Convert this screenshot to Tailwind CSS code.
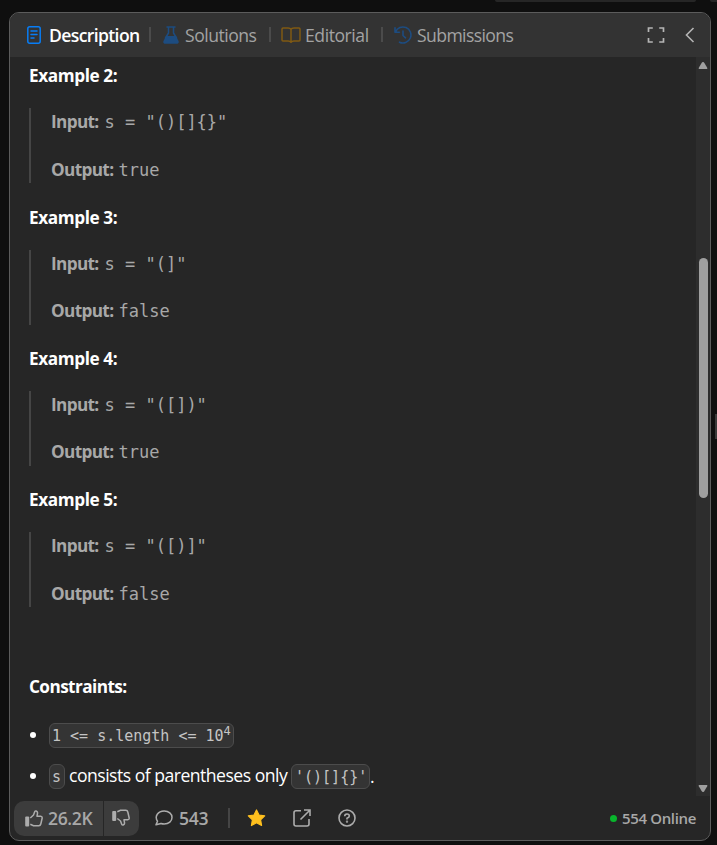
<!DOCTYPE html>
<html lang="en">
<head>
<meta charset="utf-8">
<title>Problem description</title>
<script src="https://cdn.jsdelivr.net/npm/@tailwindcss/browser@4"></script>
</head>
<body class="bg-[#0f0f0f] h-[845px] w-[717px] overflow-hidden relative font-['Open_Sans','Noto_Sans',sans-serif] text-[17.6px] text-white whitespace-nowrap">
<div class="absolute top-0 left-[495px] w-[201px] h-[2px] rounded-b bg-[#262626]"></div>
<div class="absolute top-0 left-[710px] w-[7px] h-[2px] rounded-bl bg-[#262626]"></div>
<div class="absolute top-[414px] left-[715px] w-[2px] h-[25px] bg-[#3a3a3a]"></div>
<main class="ml-[9px] mt-[12px] w-[702px] h-[829px] border border-[#5c5c5c] rounded-[10px] bg-[#262626] overflow-hidden flex flex-col">
  <header class="h-[44px] shrink-0 bg-[#333333] flex items-center justify-between pl-[17px] pr-[13px] text-[#a3a3a3]">
    <nav class="flex items-center">
      <div class="flex items-center w-[122px]">
        <svg class="w-[14px] h-[18px] mr-[8px] shrink-0" viewBox="0 0 14 18" fill="none" stroke="#087df5" stroke-width="1.5" stroke-linecap="round"><rect x=".8" y=".8" width="12.4" height="16.4" rx="2"/><path d="M4 5h6M4 8.5h6M4 12h3"/></svg>
        <span class="font-semibold text-white tracking-[-0.64px]">Description</span>
      </div>
      <i class="w-[2px] h-[15px] bg-[#4b4b4b]"></i>
      <div class="flex items-center w-[118px] pl-[12px]">
        <svg class="w-[16px] h-[18px] mr-[6px] shrink-0" viewBox="0 0 16 18"><path d="M4 1h8M5.5 1v6L2.5 12M10.500 1v6l3 5" fill="none" stroke="#1d4c80" stroke-width="1.5" stroke-linecap="round"/><path d="M3 10h10l2.500 5c.7 1.500-.2 2.800-1.800 2.800H2.300C.7 17.800-.2 16.500.5 15z" fill="#1d4c80"/></svg>
        <span class="tracking-[-0.5px]">Solutions</span>
      </div>
      <i class="w-[2px] h-[15px] bg-[#4b4b4b]"></i>
      <div class="flex items-center w-[110px] pl-[10px]">
        <svg class="w-[20px] h-[16px] mr-[4px] shrink-0" viewBox="0 0 20 16" fill="none" stroke="#805a13" stroke-width="1.5" stroke-linejoin="round"><path d="M10 2.500C9.500 1.300 8.500 1 7 1H2Q1 1 1 2v11q0 1 1 1h5q2 0 3 1.300Q11 14 13 14h5q1 0 1-1V2q0-1-1-1h-5c-1.500 0-2.500.3-3 1.500zV15"/></svg>
        <span class="tracking-[-0.45px]">Editorial</span>
      </div>
      <i class="w-[2px] h-[15px] bg-[#4b4b4b]"></i>
      <div class="flex items-center pl-[11px]">
        <svg class="w-[18px] h-[18px] mr-[5px] shrink-0" viewBox="0 0 18 18" fill="none" stroke="#1d4c80" stroke-width="1.600" stroke-linecap="round" stroke-linejoin="round"><path d="M1 1.800v4.400h4.400M1.500 6A8 8 0 1 1 5.500 16.200M9 5v4.500l2.500 2.300"/></svg>
        <span class="tracking-[-0.6px]">Submissions</span>
      </div>
    </nav>
    <div class="flex items-center gap-[18px]">
      <svg class="w-[18px] h-[18px]" viewBox="0 0 18 18" fill="none" stroke="#b5b5b5" stroke-width="1.700"><path d="M1.500 6V2h4.300M12.200 2h4.300v4M16.500 12v4h-4.300M5.800 16H1.500v-4"/></svg>
      <svg class="w-[14px] h-[18px]" viewBox="0 0 14 18" fill="none" stroke="#b5b5b5" stroke-width="1.600"><path d="M10.500 2L3.500 9l7 7"/></svg>
    </div>
  </header>
  <div class="h-[739px] shrink-0 flex">
    <article class="flex-1 pl-[19px] pt-[0.3px]">
      <section class="h-[141.33px]">
        <h3 class="h-[38px] leading-[37px] font-bold text-[17.2px] tracking-[-0.3px]"><span class="tracking-[-0.4px]">Example 2:</span></h3>
        <div class="mt-[13px] h-[75px] border-l-2 border-[#454545] pl-[20px] text-[#a8a8a8] leading-[28px]">
          <p class="h-[47.5px] flex"><b class="w-[53.5px] text-[17.2px] tracking-[-0.65px]">Input:</b><code class="font-['DejaVu_Sans_Mono',monospace] text-[17px] whitespace-pre">s = "()[]{}"</code></p>
          <p class="flex"><b class="w-[67.5px] text-[17.2px] tracking-[-0.65px]">Output:</b><code class="font-['DejaVu_Sans_Mono',monospace] text-[17px]">true</code></p>
        </div>
      </section>
      <section class="h-[141.33px]">
        <h3 class="h-[38px] leading-[37px] font-bold text-[17.2px] tracking-[-0.4px]">Example 3:</h3>
        <div class="mt-[13px] h-[75px] border-l-2 border-[#454545] pl-[20px] text-[#a8a8a8] leading-[28px]">
          <p class="h-[47.5px] flex"><b class="w-[53.5px] text-[17.2px] tracking-[-0.65px]">Input:</b><code class="font-['DejaVu_Sans_Mono',monospace] text-[17px] whitespace-pre">s = "(]"</code></p>
          <p class="flex"><b class="w-[67.5px] text-[17.2px] tracking-[-0.65px]">Output:</b><code class="font-['DejaVu_Sans_Mono',monospace] text-[17px]">false</code></p>
        </div>
      </section>
      <section class="h-[141.33px]">
        <h3 class="h-[38px] leading-[37px] font-bold text-[17.2px] tracking-[-0.4px]">Example 4:</h3>
        <div class="mt-[13px] h-[75px] border-l-2 border-[#454545] pl-[20px] text-[#a8a8a8] leading-[28px]">
          <p class="h-[47.5px] flex"><b class="w-[53.5px] text-[17.2px] tracking-[-0.65px]">Input:</b><code class="font-['DejaVu_Sans_Mono',monospace] text-[17px] whitespace-pre">s = "([])"</code></p>
          <p class="flex"><b class="w-[67.5px] text-[17.2px] tracking-[-0.65px]">Output:</b><code class="font-['DejaVu_Sans_Mono',monospace] text-[17px]">true</code></p>
        </div>
      </section>
      <section class="h-[141.33px]">
        <h3 class="h-[38px] leading-[37px] font-bold text-[17.2px] tracking-[-0.4px]">Example 5:</h3>
        <div class="mt-[13px] h-[75px] border-l-2 border-[#454545] pl-[20px] text-[#a8a8a8] leading-[28px]">
          <p class="h-[47.5px] flex"><b class="w-[53.5px] text-[17.2px] tracking-[-0.65px]">Input:</b><code class="font-['DejaVu_Sans_Mono',monospace] text-[17px] whitespace-pre">s = "([)]"</code></p>
          <p class="flex"><b class="w-[67.5px] text-[17.2px] tracking-[-0.65px]">Output:</b><code class="font-['DejaVu_Sans_Mono',monospace] text-[17px]">false</code></p>
        </div>
      </section>
      <h3 class="mt-[50px] h-[28px] leading-[28px] font-bold text-[17.2px] tracking-[-0.58px]">Constraints:</h3>
      <ul class="mt-[14px]">
        <li class="h-[41px] flex items-center"><i class="w-[6px] h-[6px] rounded-full bg-white ml-[1px] mr-[13px]"></i><code class="h-[25px] w-[185px] border border-[#4c4c4c] bg-[#343434] rounded-[6px] pl-[2px] leading-[24px] font-['DejaVu_Sans_Mono',monospace] text-[15px] text-[#c4c4c4]">1 &lt;= s.length &lt;= 10<sup class="text-[12px] leading-none top-[-6px]">4</sup></code></li>
        <li class="h-[41px] flex items-center"><i class="w-[6px] h-[6px] rounded-full bg-white ml-[1px] mr-[13px]"></i><code class="h-[25px] w-[16px] border border-[#4c4c4c] bg-[#343434] rounded-[6px] pl-[2px] leading-[24px] font-['DejaVu_Sans_Mono',monospace] text-[15px] text-[#c4c4c4]">s</code><span class="ml-[4px] w-[222px] -mt-[1px] tracking-[-0.51px]">consists of parentheses only</span><code class="h-[25px] w-[79px] border border-[#4c4c4c] bg-[#343434] rounded-[6px] pl-[3px] leading-[24px] font-['DejaVu_Sans_Mono',monospace] text-[15px] text-[#c4c4c4]">'()[]{}'</code><span>.</span></li>
      </ul>
    </article>
    <aside class="w-[14px] bg-[#2d2d2d] flex flex-col items-center">
      <svg class="w-[10px] h-[8px] mt-[5px] shrink-0" viewBox="0 0 10 8" fill="#9f9f9f"><path d="M5 0c.7 0 1 .4 1.400 1L9.200 5.700c.5 1-.1 1.300-.8 1.300H1.600C.9 7 .3 6.700.8 5.700L3.600 1C4 .4 4.300 0 5 0"/></svg>
      <div class="mt-[188px] w-[9px] h-[240px] rounded-full bg-[#9f9f9f] shrink-0"></div>
      <svg class="w-[10px] h-[8px] mt-auto mb-[4px] shrink-0" viewBox="0 0 10 8" fill="#9f9f9f"><path d="M5 8c.7 0 1-.4 1.400-1L9.200 2.300C9.700 1.300 9.100 1 8.400 1H1.600C.9 1 .3 1.300.8 2.300L3.600 7C4 7.600 4.300 8 5 8"/></svg>
    </aside>
  </div>
  <footer class="flex-1 flex items-center justify-between pl-[4px] pr-[14px] text-[#a8a8a8] font-semibold">
    <div class="flex items-center h-[35px]">
      <div class="w-[89px] h-[35px] rounded-l-[10px] bg-[#3c3c3c] flex items-center pl-[11px]">
        <svg class="w-[18px] h-[17px] mr-[5px]" viewBox="0 0 18 17" fill="none" stroke="#acacac" stroke-width="1.500" stroke-linejoin="round"><rect x=".2" y="6.500" width="4" height="10" rx="1" fill="#acacac" stroke="none"/><path d="M5.300 8L8.500 5 9.800 1.500Q10.200.7 11.200 1q1.600.5 1.300 2.400L12 6.200h3.700q1.600.2 1.500 1.800L15.800 14q-.4 1.700-2 1.700H8.500L5.300 14.300"/></svg>
        <span class="tracking-[-0.4px]">26.2K</span>
      </div>
      <div class="ml-[1px] w-[35px] h-[35px] rounded-r-[10px] bg-[#3c3c3c] flex items-center pl-[8px]">
        <svg class="w-[18px] h-[17px] -mt-[2px]" viewBox="0 0 18 17" fill="none" stroke="#acacac" stroke-width="1.500" stroke-linejoin="round"><rect x=".2" y="2" width="4" height="10" rx="1" fill="#acacac" stroke="none"/><path d="M5.300 2.700L8.500 1.300h5.300q1.600 0 2 1.700L17.200 9q.1 1.600-1.500 1.800H12l.5 2.800q.3 1.900-1.300 2.400-1 .3-1.400-.5L8.500 12 5.300 9.500"/></svg>
      </div>
      <svg class="w-[18px] h-[16px] ml-[16px] mr-[6px]" viewBox="0 0 18 16" fill="none" stroke="#acacac" stroke-width="1.500" stroke-linejoin="round"><path d="M1 14.800l1.500-3.600C-.8 6.200 3 1 9.200 1 13.800 1 17 4 17 7.500S13.800 14 9.200 14q-1.700 0-3.200-.5z"/></svg>
      <span class="tracking-[-0.3px] w-[30px]">543</span>
      <i class="w-[2px] h-[20px] bg-[#454545] ml-[19px]"></i>
      <svg class="w-[19px] h-[18px] ml-[17px]" viewBox="0 0 19 18"><path d="M9.500 1l2.500 5 5.700.8-4.100 4 1 5.700-5.100-2.700-5.100 2.700 1-5.700-4.100-4L7 6z" fill="#ffc01e" stroke="#ffc01e" stroke-width="1.200" stroke-linejoin="round"/></svg>
      <svg class="w-[18px] h-[18px] ml-[27px]" viewBox="0 0 18 18" fill="none" stroke="#acacac" stroke-width="1.600"><path d="M8 1.800H3Q1 1.800 1 3.800V15q0 2 2 2h11q2 0 2-2v-5M7.500 10.500L16.800 1.200M11 1h6v6"/></svg>
      <svg class="w-[18px] h-[18px] ml-[27px]" viewBox="0 0 18 18" fill="none" stroke="#acacac" stroke-width="1.600"><circle cx="9" cy="9" r="8"/><path d="M6.700 7.300Q6.700 5 9 5t2.300 2Q11.300 8.300 9 9.200v1.200"/><circle cx="9" cy="12.600" r=".4"/></svg>
    </div>
    <div class="flex items-center text-[15px]"><i class="w-[7px] h-[7px] rounded-full bg-[#08b52c] mr-[5px]"></i><span class="tracking-[-0.35px]">554 Online</span></div>
  </footer>
</main>
</body>
</html>
